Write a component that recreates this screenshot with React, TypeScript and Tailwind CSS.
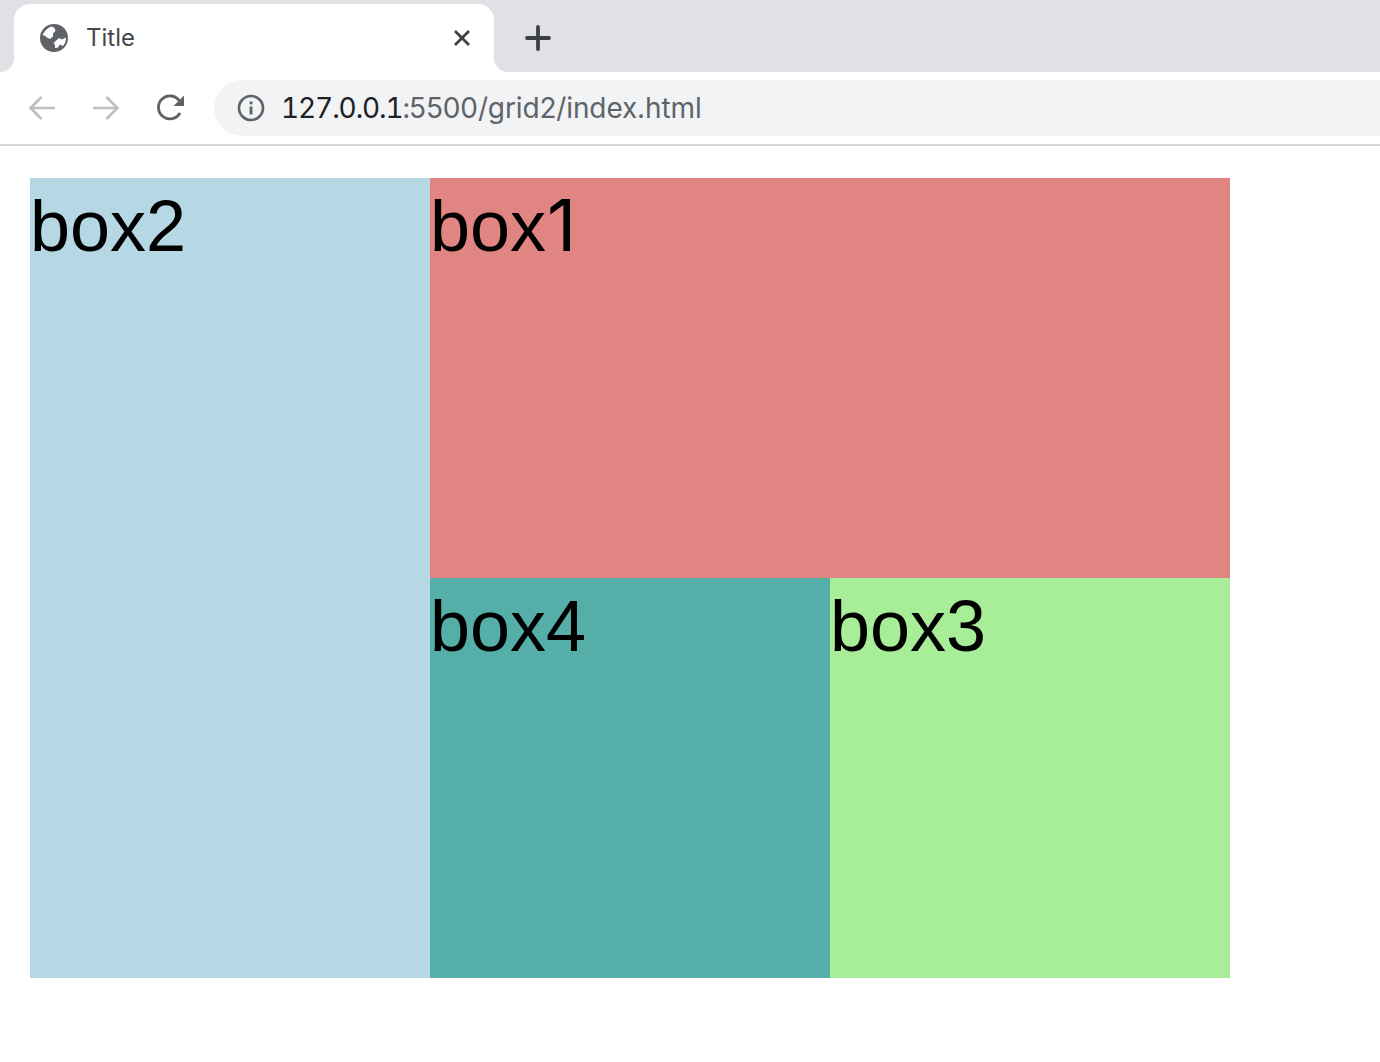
export default function App() {
  return (
    <div className="min-h-[1062px] bg-white font-['Inter',sans-serif]">
      <div className="flex h-[72px] bg-white">
        <div className="w-[14px] bg-[#dfe1e5] rounded-br-[14px]" />
        <div className="w-[480px] bg-[#dfe1e5] pt-1">
          <div className="flex h-[68px] items-center bg-white rounded-t-[16px] pl-[26px] pr-[23px]">
            <svg width="28" height="28" viewBox="0 0 28 28" className="shrink-0">
              <circle cx="14" cy="14" r="14" fill="#5f6368" />
              <path d="M2.5 11 C4.5 6.5 8 3.5 12 2.5 L14.5 4 L15.5 7 L13 9.5 L13 12.5 L10 15 L7 13.5 L4.5 11.5Z" fill="#fff" />
              <path d="M13.5 19 L19 14 L22 15.5 L26 13.5 C26 17 25 20 23 22 L20 20.5 L18 23.5 L15 24 L15 21Z" fill="#fff" />
            </svg>
            <span className="ml-[18px] text-[24px] leading-none text-[#45484d]">Title</span>
            <svg width="18" height="18" viewBox="0 0 18 18" className="ml-auto" fill="none" stroke="#3c4043" strokeWidth="2.8">
              <path d="M2 2 L16 16 M16 2 L2 16" />
            </svg>
          </div>
        </div>
        <div className="flex-1 flex items-center bg-[#dfe1e5] rounded-bl-[14px] pl-[31px] pt-1">
          <svg width="26" height="26" viewBox="0 0 26 26" fill="none" stroke="#3c4043" strokeWidth="3.8" strokeLinecap="round">
            <path d="M13 2 V24 M2 13 H24" />
          </svg>
        </div>
      </div>
      <div className="flex h-[74px] border-b-2 border-[#d4d5d7] pt-2 pb-2">
        <div className="flex items-center pl-[28px]">
          <svg width="28" height="26" viewBox="0 0 28 26" fill="none" stroke="#bdbfc2" strokeWidth="2.6">
            <path d="M27 13 H3 M13.5 2 L2.5 13 L13.5 24" />
          </svg>
          <svg width="28" height="26" viewBox="0 0 28 26" fill="none" stroke="#bdbfc2" strokeWidth="2.6" className="ml-9">
            <path d="M1 13 H25 M14.5 2 L25.5 13 L14.5 24" />
          </svg>
          <svg width="28" height="28" viewBox="0 0 28 28" className="ml-[36px]" fill="none">
            <path d="M24 19 A11.5 11.5 0 1 1 23.5 7" stroke="#5f6368" strokeWidth="2.8" />
            <path d="M28 1.5 V12 H17.5 Z" fill="#5f6368" />
          </svg>
        </div>
        <div className="ml-[30px] flex flex-1 items-center h-14 bg-[#f1f3f4] rounded-l-[28px] pl-[23px]">
          <svg width="28" height="28" viewBox="0 0 28 28" fill="none" className="shrink-0">
            <circle cx="14" cy="14" r="12" stroke="#5f6368" strokeWidth="2.6" />
            <rect x="12.6" y="12.5" width="2.8" height="8" fill="#5f6368" />
            <rect x="12.6" y="7.5" width="2.8" height="2.8" fill="#5f6368" />
          </svg>
          <div className="ml-4 text-[28px] leading-none">
            <span className="text-[#202124] tabular-nums tracking-[-1.1px]">127.0.0.1</span>
            <span className="text-[#5f6368] tracking-[-0.13px]"><span className="tracking-[-1.1px] tabular-nums">:</span>5500/grid2/index.html</span>
          </div>
        </div>
      </div>
      <div className="pl-[30px] pt-8">
        <div className="grid grid-cols-[400px_400px_400px] grid-rows-[400px_400px] w-[1200px] text-[72px] leading-[96px] text-black font-['Liberation_Sans',sans-serif]">
          <div className="row-span-2 bg-[#b6d7e4]">box2</div>
          <div className="col-span-2 bg-[#e18583]">box<span className="font-['Inter'] ml-px leading-none">1</span></div>
          <div className="bg-[#55afa8]">box4</div>
          <div className="bg-[#a8ee98]">box3</div>
        </div>
      </div>
    </div>
  );
}
